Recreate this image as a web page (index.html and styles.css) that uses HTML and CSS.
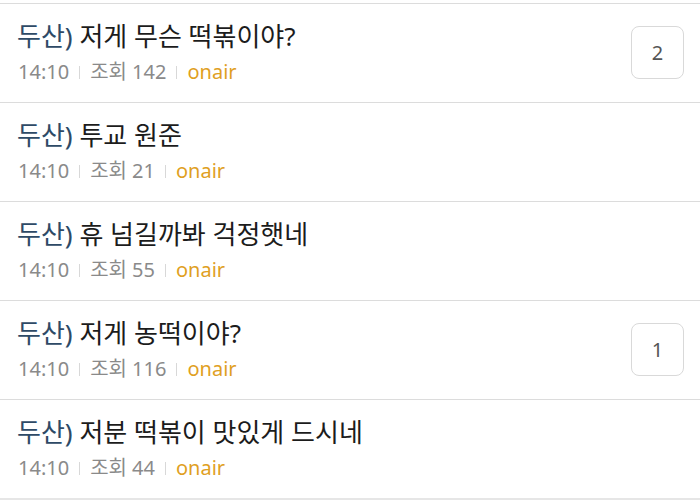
FILE: index.html
```html
<!DOCTYPE html>
<html lang="ko">
<head>
<meta charset="utf-8">
<link rel="stylesheet" href="styles.css">
</head>
<body>
<ul class="list">
  <li class="item">
    <div class="body">
      <div class="title"><span class="tag">두산)</span> 저게 무슨 떡볶이야?</div>
      <div class="meta"><span>14:10</span><i class="sep"></i><span>조회 142</span><i class="sep"></i><span class="nick">onair</span></div>
    </div>
    <div class="count">2</div>
  </li>
  <li class="item">
    <div class="body">
      <div class="title"><span class="tag">두산)</span> 투교 원준</div>
      <div class="meta"><span>14:10</span><i class="sep"></i><span>조회 21</span><i class="sep"></i><span class="nick">onair</span></div>
    </div>
  </li>
  <li class="item">
    <div class="body">
      <div class="title"><span class="tag">두산)</span> 휴 넘길까봐 걱정햇네</div>
      <div class="meta"><span>14:10</span><i class="sep"></i><span>조회 55</span><i class="sep"></i><span class="nick">onair</span></div>
    </div>
  </li>
  <li class="item">
    <div class="body">
      <div class="title"><span class="tag">두산)</span> 저게 농떡이야?</div>
      <div class="meta"><span>14:10</span><i class="sep"></i><span>조회 116</span><i class="sep"></i><span class="nick">onair</span></div>
    </div>
    <div class="count">1</div>
  </li>
  <li class="item">
    <div class="body">
      <div class="title"><span class="tag">두산)</span> 저분 떡볶이 맛있게 드시네</div>
      <div class="meta"><span>14:10</span><i class="sep"></i><span>조회 44</span><i class="sep"></i><span class="nick">onair</span></div>
    </div>
  </li>
</ul>
</body>
</html>
```
FILE: styles.css
```css
html, body {
  margin: 0;
  padding: 0;
  background: #ffffff;
}
body {
  font-family: "Noto Sans", "Noto Sans CJK KR", sans-serif;
  overflow: hidden;
}
.list {
  list-style: none;
  margin: 3px 0 0;
  padding: 0;
  border-bottom: 2px solid #e6e6e6;
}
.item {
  display: flex;
  align-items: center;
  height: 98px;
  border-top: 1px solid #dcdcdc;
  padding: 0 16px 0 17px;
}
.body {
  flex: 1;
  display: flex;
  flex-direction: column;
}
.title {
  font-size: 26px;
  line-height: 34px;
  color: #1c1c1c;
  white-space: nowrap;
}
.tag {
  color: #2e4a66;
}
.meta {
  display: flex;
  align-items: center;
  font-size: 20px;
  line-height: 30px;
  color: #8a8a8a;
  margin-top: 4px;
  padding-left: 1px;
}
.sep {
  display: inline-block;
  width: 1px;
  height: 13px;
  background: #d8d8d8;
  margin: 0 10px;
}
.nick {
  color: #e0a01f;
}
.count {
  width: 51px;
  height: 51px;
  border: 1px solid #d9d9d9;
  border-radius: 8px;
  display: flex;
  align-items: center;
  justify-content: center;
  font-size: 20px;
  color: #555555;
  margin-top: -2px;
}
```
